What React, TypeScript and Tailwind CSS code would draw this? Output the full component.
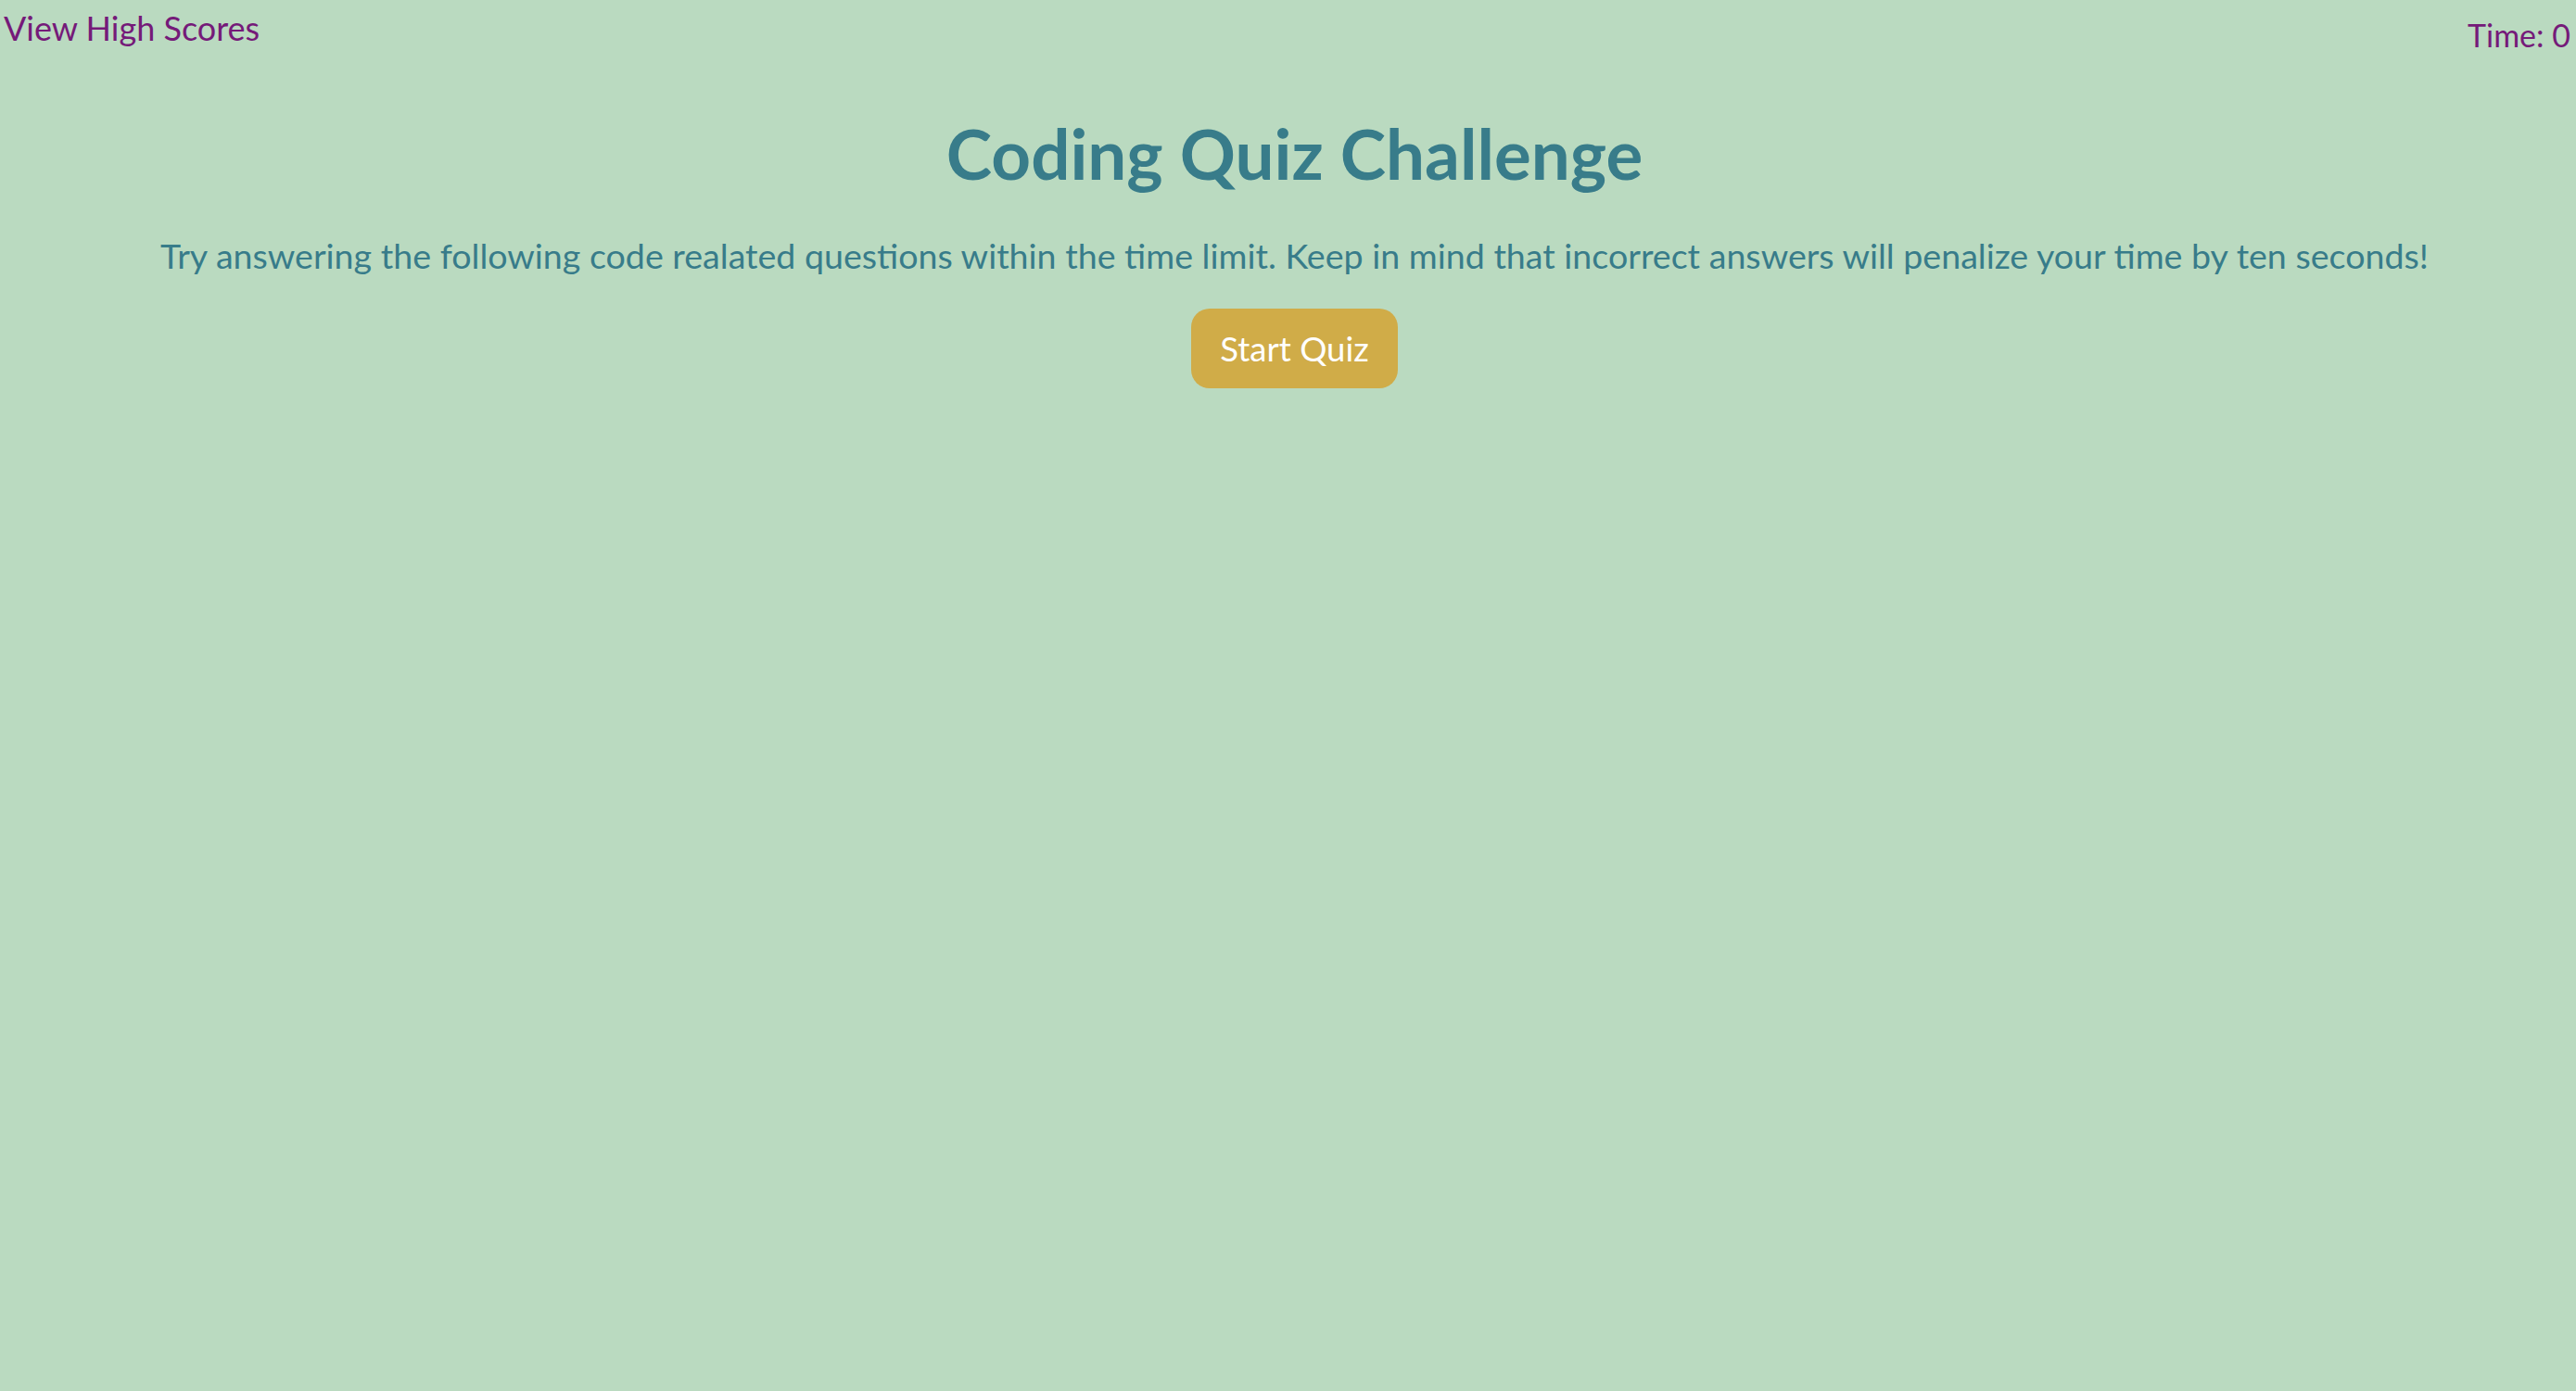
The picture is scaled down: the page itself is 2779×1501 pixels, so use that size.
export default function App() {
  return (
    <div className="min-h-screen bg-[#badac0] font-['Lato','Open_Sans',sans-serif]">
      <header className="flex items-start justify-between">
        <a className="pl-[4px] pt-[6px] text-[36px] leading-[48px] text-[#751a79]">View High Scores</a>
        <div className="pr-[6px] pt-[16px] text-[34px] leading-[44px] text-[#751a79]">Time: 0</div>
      </header>
      <main className="flex flex-col items-center pl-[14px] text-center">
        <h1 className="mt-[60px] text-[74.5px] font-bold leading-[90px] text-[#387c8a]">Coding Quiz Challenge</h1>
        <p className="mt-[42px] text-[37.6px] leading-[48px] text-[#387c8a]">
          Try answering the following code realated questions within the time limit. Keep in mind that incorrect answers will penalize your time by ten seconds!
        </p>
        <button className="mt-[33px] h-[86px] w-[223px] rounded-[20px] bg-[#d0ac48] text-[36.5px] text-white">Start Quiz</button>
      </main>
    </div>
  );
}
